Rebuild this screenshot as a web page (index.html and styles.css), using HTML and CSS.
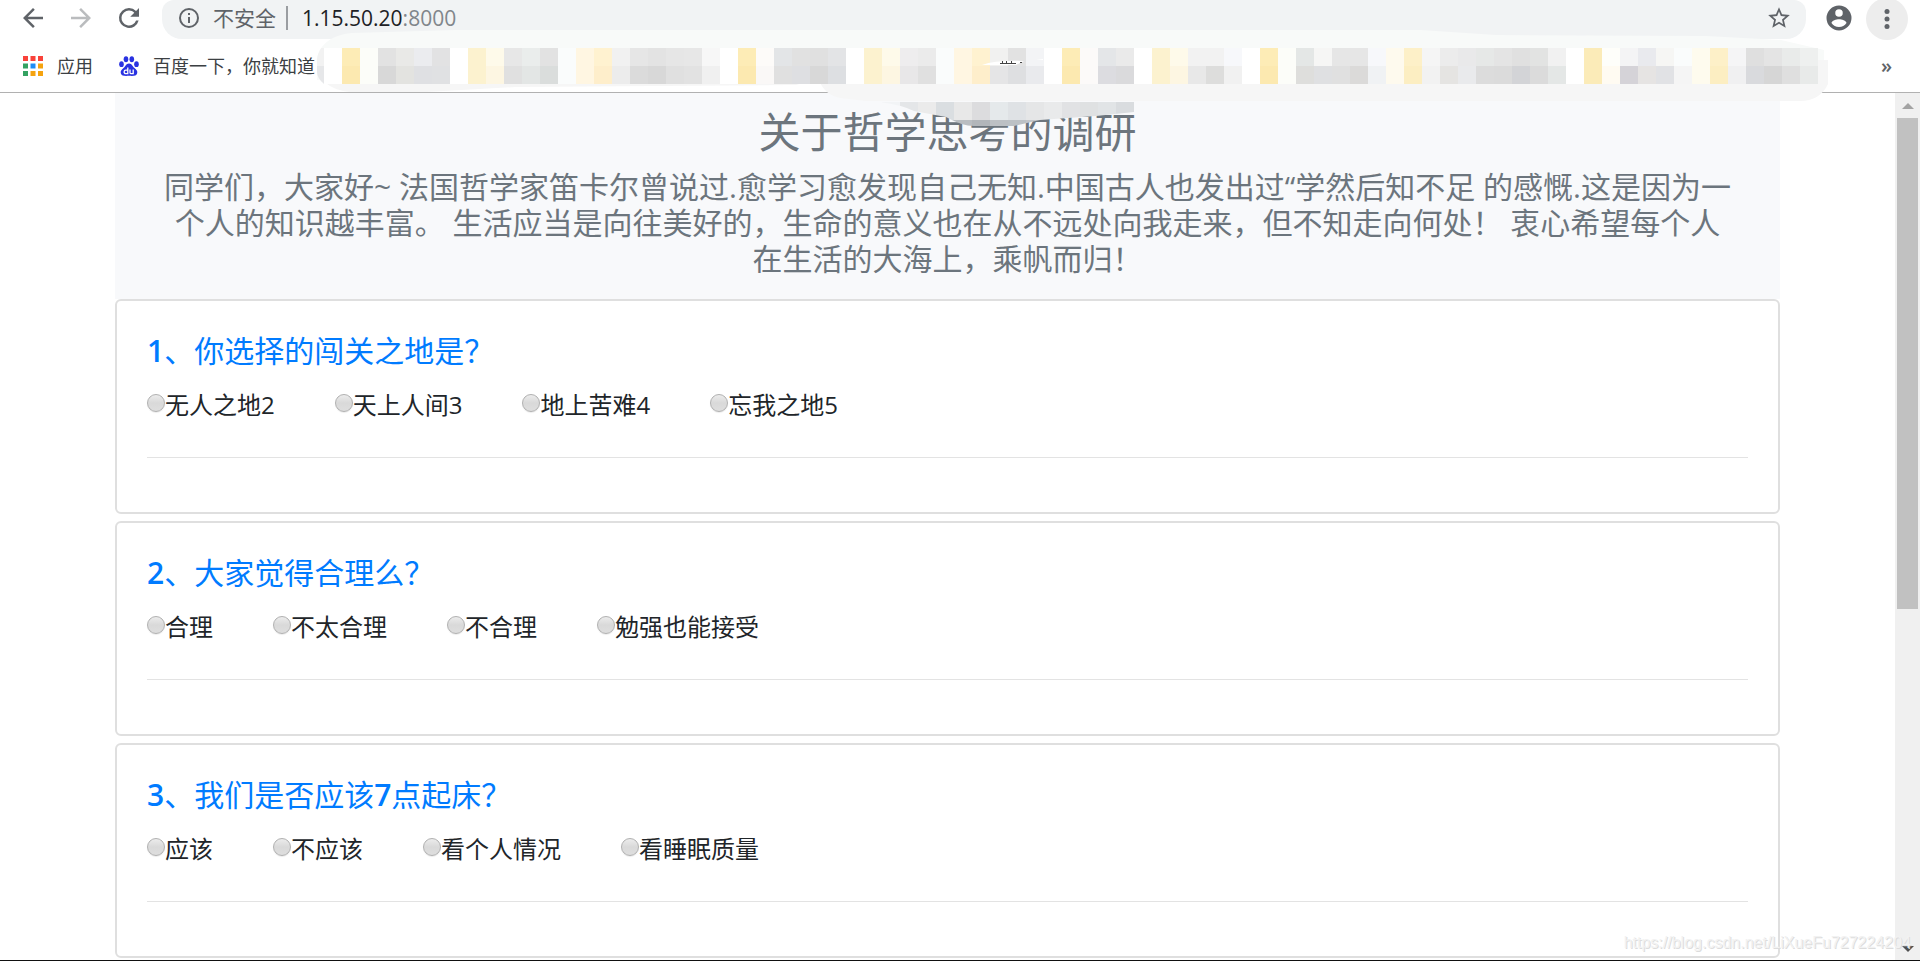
FILE: index.html
```html
<!DOCTYPE html>
<html lang="zh-CN">
<head>
<meta charset="utf-8">
<title>关于哲学思考的调研</title>
<link rel="stylesheet" href="styles.css">
</head>
<body>
<header class="browser">
  <div class="toolbar">
    <button class="tool" aria-label="后退"><svg viewBox="0 0 24 24"><path d="M20 11H7.83l5.59-5.59L12 4l-8 8 8 8 1.41-1.41L7.83 13H20z"/></svg></button>
    <button class="tool tool-off" aria-label="前进" disabled><svg viewBox="0 0 24 24"><path d="M12 4l-1.41 1.41L16.17 11H4v2h12.17l-5.58 5.59L12 20l8-8z"/></svg></button>
    <button class="tool" aria-label="刷新"><svg viewBox="0 0 24 24"><path d="M17.65 6.35A7.96 7.96 0 0 0 12 4a8 8 0 1 0 7.73 10h-2.08A6 6 0 1 1 12 6c1.66 0 3.14.69 4.22 1.78L13 11h7V4z"/></svg></button>
    <div class="address">
      <svg class="info" viewBox="0 0 24 24"><path d="M11 7h2v2h-2zm0 4h2v6h-2zm1-9a10 10 0 1 0 0 20 10 10 0 0 0 0-20zm0 18a8 8 0 1 1 0-16 8 8 0 0 1 0 16z"/></svg>
      <span class="insecure">不安全</span>
      <span class="divider"></span>
      <span class="url">1.15.50.20<span class="port">:8000</span></span>
      <button class="star" aria-label="收藏"><svg viewBox="0 0 24 24"><path d="M22 9.24l-7.19-.62L12 2 9.19 8.63 2 9.24l5.46 4.73L5.82 21 12 17.27 18.18 21l-1.63-7.03zM12 15.4l-3.76 2.27 1-4.28-3.32-2.88 4.38-.38L12 6.1l1.71 4.04 4.38.38-3.32 2.88 1 4.28z"/></svg></button>
    </div>
    <button class="tool account" aria-label="账户"><svg viewBox="0 0 24 24"><path d="M12 2a10 10 0 1 0 0 20 10 10 0 0 0 0-20zm0 3a3 3 0 1 1 0 6 3 3 0 0 1 0-6zm0 14.2a7.2 7.2 0 0 1-6-3.22c.03-1.99 4-3.08 6-3.08s5.97 1.09 6 3.08a7.2 7.2 0 0 1-6 3.22z"/></svg></button>
    <button class="tool menu" aria-label="菜单"><svg viewBox="0 0 24 24"><circle cx="12" cy="6" r="2"/><circle cx="12" cy="12" r="2"/><circle cx="12" cy="18" r="2"/></svg></button>
  </div>
  <nav class="bookmarks">
    <a class="bookmark" href="#apps">
      <svg class="apps" viewBox="0 0 20 20"><path fill="#f9423a" d="M0 0h5v5H0zM7.500 0h5v5h-5zM15 0h5v5h-5z"/><path fill="#34a262" d="M0 7.500h5v5H0zM0 15h5v5H0z"/><path fill="#1e8cf5" d="M7.500 7.500h5v5h-5z"/><path fill="#f5a30f" d="M15 7.500h5v5h-5zM7.500 15h5v5h-5zM15 15h5v5h-5z"/></svg>
      应用
    </a>
    <a class="bookmark" href="#baidu">
      <svg class="baidu" viewBox="0 0 20 20"><g fill="#2932e1"><ellipse cx="2.500" cy="8.200" rx="2.300" ry="2.900"/><ellipse cx="7" cy="3.200" rx="2.300" ry="3"/><ellipse cx="12.800" cy="3.200" rx="2.300" ry="3"/><ellipse cx="17.500" cy="8.200" rx="2.300" ry="2.900"/><path d="M10 7.500c3 0 3.600 3 5.500 4.600 2.400 2 3.300 3.300 2.600 5.400-.8 2.500-3.500 2.500-8.100 2.300-4.600.2-7.300.2-8.100-2.300-.7-2.100.2-3.400 2.600-5.400C6.400 10.500 7 7.500 10 7.500z"/></g><g fill="none" stroke="#fff" stroke-width="1.300"><path d="M8.800 11.500v6.200H6.900a1.700 1.700 0 0 1 0-3.600h1.900M11 13.500v3q0 1.200 1.200 1.200h2v-4.200"/></g></svg>
      百度一下，你就知道
    </a>
    <button class="more" aria-label="更多书签">»</button>
  </nav>
  <svg class="smear" viewBox="0 0 1520 100" aria-hidden="true">
    <clipPath id="edge"><path d="M1 30C2 18 12 5 36 3H1504V54H8Q1 48 1 42z"/></clipPath>
    <path fill="#f8faf9" d="M1 30C2 18 12 5 36 3L140 0h965L1180 5 1390 6 1465 10 1508 20V50H1z"/>
    <path fill="#f6f6f6" d="M1 40C4 50 14 60 34 62h76l90-5 280-2 10-3h14c3 8 10 14 20 16l26 3h934q20 0 28-17V30H1z"/>
    <g id="mosaic" clip-path="url(#edge)" shape-rendering="crispEdges"></g>
    <clipPath id="drip"><path d="M564 72Q586 75 598 81L630 87Q648 97 660 96H698L724 90 780 86 818 82V72z"/></clipPath>
    <g id="mosaic-drip" clip-path="url(#drip)" shape-rendering="crispEdges"></g>
    <path fill="#fff" d="M666 35Q680 30 708 31L700 35zM720 30l7-1v1z"/>
    <path fill="#444" d="M684 33h16v1h-16zM686 31h1v2h-1zM690 31h1v2h-1zM695 31h1v2h-1zM704 32h2v1h-2z"/>
  </svg>
</header>
<div class="viewport">
  <main class="page">
    <section class="intro">
      <h1>关于哲学思考的调研</h1>
      <p>同学们，大家好~ 法国哲学家笛卡尔曾说过.愈学习愈发现自己无知.中国古人也发出过“学然后知不足 的感慨.这是因为一<br>个人的知识越丰富。 生活应当是向往美好的，生命的意义也在从不远处向我走来，但不知走向何处！ 衷心希望每个人<br>在生活的大海上，乘帆而归！</p>
    </section>
    <form class="questions">
      <fieldset class="card">
        <legend><b>1</b>、你选择的闯关之地是？</legend>
        <div class="options">
          <label><input type="radio" name="q1">无人之地2</label>
          <label><input type="radio" name="q1">天上人间3</label>
          <label><input type="radio" name="q1">地上苦难4</label>
          <label><input type="radio" name="q1">忘我之地5</label>
        </div>
        <hr>
      </fieldset>
      <fieldset class="card">
        <legend><b>2</b>、大家觉得合理么？</legend>
        <div class="options">
          <label><input type="radio" name="q2">合理</label>
          <label><input type="radio" name="q2">不太合理</label>
          <label><input type="radio" name="q2">不合理</label>
          <label><input type="radio" name="q2">勉强也能接受</label>
        </div>
        <hr>
      </fieldset>
      <fieldset class="card">
        <legend><b>3</b>、我们是否应该<b>7</b>点起床？</legend>
        <div class="options">
          <label><input type="radio" name="q3">应该</label>
          <label><input type="radio" name="q3">不应该</label>
          <label><input type="radio" name="q3">看个人情况</label>
          <label><input type="radio" name="q3">看睡眠质量</label>
        </div>
        <hr>
      </fieldset>
    </form>
  </main>
  <div class="scrollbar" aria-hidden="true">
    <svg class="arrow arrow-up" viewBox="0 0 12 6"><path d="M6 0l6 6H0z"/></svg>
    <div class="track"><div class="thumb"></div></div>
    <svg class="arrow arrow-down" viewBox="0 0 12 6"><path d="M0 0h12L6 6z"/></svg>
  </div>
  <div class="watermark">https://blog.csdn.net/LiXueFu727224204</div>
</div>
<script src="mosaic.js"></script>
</body>
</html>
```
FILE: styles.css
```css
* { box-sizing: border-box; }

body {
  margin: 0;
  height: 100vh;
  display: flex;
  flex-direction: column;
  overflow: hidden;
  background: #fff;
  color: #212529;
  font-family: "Open Sans", "Noto Sans CJK SC", sans-serif;
  border-bottom: 1px solid #111;
}

button {
  padding: 0;
  border: 0;
  background: none;
  font: inherit;
  color: inherit;
}

svg { display: block; }

.browser {
  position: relative;
  z-index: 1;
  flex: none;
  border-bottom: 1px solid #b1b1b1;
  color: #5f6368;
}

.toolbar {
  display: flex;
  align-items: center;
  height: 39px;
  padding: 0 12px 0 18px;
  gap: 18px;
}

.tool svg {
  width: 30px;
  height: 30px;
  fill: #5f6368;
}

.tool, .star, .info { margin-top: -3px; }

.tool-off svg { fill: #babcbe; }

.address {
  flex: 1;
  display: flex;
  align-items: center;
  height: 39px;
  padding: 0 14px;
  border-radius: 0 0 20px 20px;
  border-top-left-radius: 12px;
  border-top-right-radius: 12px;
  background: #f1f3f4;
}

.info {
  width: 24px;
  height: 24px;
  margin-left: 1px;
  fill: #5f6368;
}

.insecure {
  margin-left: 12px;
  font-size: 21px;
  line-height: 36px;
  margin-top: -3px;
}

.divider {
  width: 2px;
  height: 24px;
  margin: -3px 14px 0 10px;
  background: #9a9da1;
}

.url {
  flex: 1;
  margin-top: -3px;
  font-size: 21px;
  line-height: 36px;
  color: #202124;
}

.port { color: #80868b; }

.star svg {
  width: 26px;
  height: 26px;
  fill: #5f6368;
}

.account { margin-right: -6px; }

.menu {
  display: grid;
  place-items: center;
  width: 42px;
  height: 42px;
  margin-top: -1px;
  border-radius: 50%;
  background: #ededed;
}

.bookmarks {
  display: flex;
  align-items: center;
  height: 53px;
  padding: 0 28px 0 23px;
  gap: 26px;
}

.bookmark {
  display: flex;
  align-items: center;
  gap: 14px;
  color: #3c4043;
  font-size: 18px;
  line-height: 24px;
  text-decoration: none;
}

.apps, .baidu {
  width: 20px;
  height: 20px;
}

.more {
  margin-left: auto;
  font-size: 20px;
  font-weight: 600;
  line-height: 24px;
}

.smear {
  position: absolute;
  top: 30px;
  left: 316px;
  width: 1520px;
  height: 100px;
}

.viewport {
  position: relative;
  flex: 1;
  min-height: 0;
  display: flex;
  overflow: hidden;
}

.page {
  flex: 1;
  padding: 0 115px;
}

.intro {
  padding: 14px 30px 22px;
  background: #f8f9fb;
  color: #6c757d;
  text-align: center;
}

.intro h1 {
  margin: 0 0 12px;
  font-size: 42px;
  font-weight: 400;
  line-height: 50px;
}

.intro p {
  margin: 0;
  font-size: 30px;
  line-height: 36px;
}

.questions {
  display: grid;
  gap: 7px;
}

.card {
  min-width: 0;
  margin: 0;
  padding: 32px 30px 54px;
  border: 2px solid #dfdfdf;
  border-radius: 6px;
}

.card legend {
  float: left;
  width: 100%;
  padding: 0;
  margin-bottom: 18px;
  color: #007bff;
  font-size: 30px;
  line-height: 36px;
}

.card b { font-weight: 600; }

.options {
  clear: both;
  display: flex;
  gap: 60px;
  font-size: 24px;
  line-height: 36px;
}

.options label {
  display: flex;
  align-items: center;
}

.options input {
  appearance: none;
  width: 18px;
  height: 18px;
  margin: 0 0 4px;
  border: 1px solid #b0b0b0;
  border-radius: 50%;
  background: linear-gradient(#ececec, #d9d9d9 50%, #dedede);
  box-shadow: 0 1px 1px #ececec;
}

.card hr {
  margin: 34px 0 0;
  border: 0;
  border-top: 1px solid #e3e3e3;
}

.scrollbar {
  flex: none;
  width: 25px;
  display: flex;
  flex-direction: column;
  align-items: center;
  gap: 9px;
  padding: 10px 0 8px;
  background: #f0f0f0;
}

.arrow {
  width: 12px;
  height: 6px;
}

.arrow-up { fill: #a3a3a3; }
.arrow-down { fill: #505050; }

.track {
  flex: 1;
  width: 21px;
}

.thumb {
  height: 60%;
  background: #c1c1c1;
}

.watermark {
  position: absolute;
  right: 9px;
  bottom: 7px;
  font: 16px/20px "Liberation Sans", Arial, sans-serif;
  color: #f2f2f2;
  text-shadow: 1px 1px 0 #dcdcdc;
}
```
FILE: mosaic.js
```javascript
// Each entry is one column of the pixelated strip: "top/bottom" or a single colour for both.
const columns = `f2f2f2/e6e7e9 ffffff fdecb6/fce9b0 fcfdf9 e2e2e2/d8d8d8 e9e9e7/e3e3e0 ebecef/dfe0e3 e2e2e3/e0e1e3
ffffff fcf2cf fefaea/fdf6e2 e7e7e7/e0e0e0 eaedec/e3e6e5 e2e2e2/dadddc fafcfc fff6e2 fff2d0/feeecb
f1f1f1/ececec e6e6e6/dbdbdb e3e3e3/d8d8d8 e6e6e6/e0e0e0 e7e7e7/e2e2e2 f7f7f7/f0f0f0 ffffff fdecb6/fce9b0
fdfbf9/faf8f7 e3e5e7/e0e0e0 e1e1e1/dedfe2 e0e0e0/d8d8d8 e3e4e6/dddfe2 ffffff fcf2cf fefaea/fdf6e2
eeedee/e8e7e8 ebebeb/e0e0e0 fafcfc fff6e2 fff2d0/feeecb f1f1f0/e5e5e6 e2e2e2/dedfe1 f3f4f6/e9eaed ffffff
fdecb6/fce9b0 fcfaf9 e4e6e8/dcdce0 eaeaea/dadadc ffffff fcf2cf fefaea/fdf6e2 f2f2f2/e8e8e8 f2f2f2/dddddc
f7f8fb/f1f1f1 ffffff fdecb6/fce9b0 fcfdf9 e4e7e6/dededc f6f6f5/dfe0e2 e6e6e6/e0e0e0 e6e6e6/dbdad9
f7f8fb/f0f2f4 fefaee fdf0c8/fceec2 f5f5f5/f2f2f2 ececec/e5e4e2 e9e9ea/e9eaec e6e8e7/dcdcdc e4e4e4/dbdbdb
e0e0e0/d3d4d7 e2e3e2/dbdbdb f1f1f1/e4e7e6 ffffff fbebb8 fefefa/fffbf2 f4f4f5/d5d3d8 e9eaee/e6e4e3
f6f6f4/e1e2e5 fafcfc/f5f5f5 fefbee fdf0c8/fceec2 f5f5f6/f0f0f1 dfdfdf/d9dadd e4e4e4/d6d6d6 e9ebea/dfdfdf
eef0ef/e8eae9`.split(/\s+/);

const dripColumns = `f2f4f6 e4e6e8/c8cbce ebebeb/c8cbce dadee1/c0c4c8 e8e8e8/b9bdc1 dcdcde/b2b6ba e5e9eb/bcc0c4
dfe2e5/bcc1c5 e5e6e7/c2c5c9 e9eaeb/c8cbce e1e2e4 dfe1e2 e1e4e6 d9dcdf`.split(/\s+/);

const CELL = 18;

function drawCells(id, cells, left, top) {
  const group = document.getElementById(id);
  cells.forEach((cell, i) => {
    const [upper, lower = upper] = cell.split('/');
    [upper, lower].forEach((colour, row) => {
      const rect = document.createElementNS('http://www.w3.org/2000/svg', 'rect');
      rect.setAttribute('x', left + i * CELL);
      rect.setAttribute('y', top + row * CELL);
      rect.setAttribute('width', CELL);
      rect.setAttribute('height', CELL);
      rect.setAttribute('fill', '#' + colour);
      group.append(rect);
    });
  });
}

drawCells('mosaic', columns, -10, 18);
drawCells('mosaic-drip', dripColumns, 566, 72);
```
